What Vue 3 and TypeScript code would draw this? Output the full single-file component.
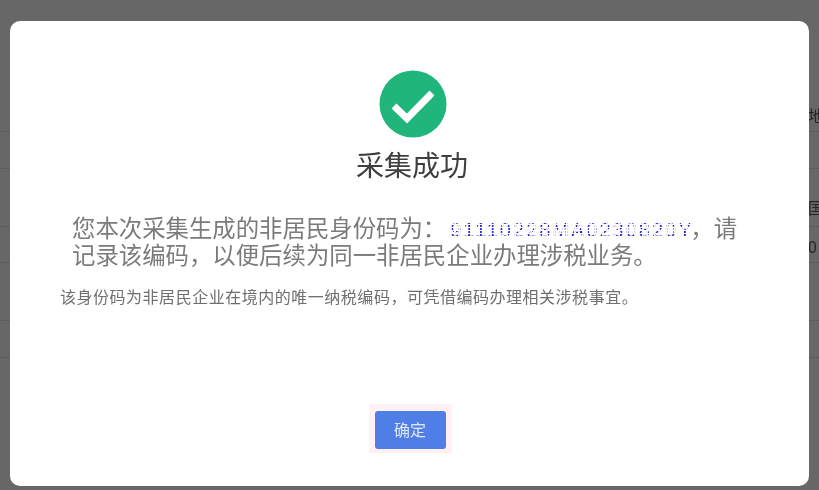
<script setup lang="ts">
const rows: { gap: number; left: string; top: number }[] = [
  { gap: 132, left: '地', top: 115 },
  { gap: 37, left: '', top: 0 },
  { gap: 58, left: '国', top: 207 },
  { gap: 36, left: '0', top: 246 },
  { gap: 58, left: '', top: 0 },
  { gap: 37, left: '', top: 0 },
]
const hints = rows.filter((r) => r.left)
</script>

<template>
  <div class="page">
    <div class="table">
      <div v-for="(r, i) in rows" :key="i" class="row" :style="{ height: r.gap + 'px' }"></div>
    </div>
    <span v-for="h in hints" :key="h.left" class="peek" :style="{ top: h.top - 8 + 'px' }">{{ h.left }}</span>

    <section class="modal">
      <svg class="ok" viewBox="0 0 68 68" width="68" height="68" aria-hidden="true">
        <circle cx="34" cy="34" r="33.5" fill="#1fb57b" />
        <path d="M15 36 L28 48.5 L53 23" fill="none" stroke="#fff" stroke-width="7" stroke-linejoin="miter" />
      </svg>
      <h1 class="title">采集成功</h1>
      <p class="main">
        您本次采集生成的非居民身份码为：<span class="code">91110228MA0230820Y</span>，请<br />记录该编码，以便后续为同一非居民企业办理涉税业务。
      </p>
      <p class="note">该身份码为非居民企业在境内的唯一纳税编码，可凭借编码办理相关涉税事宜。</p>
      <div class="actions">
        <div class="halo"><button class="confirm" type="button">确定</button></div>
      </div>
    </section>
  </div>
</template>

<style>
html, body { margin: 0; background: #666; }
</style>

<style scoped>
.page {
  position: relative;
  width: 819px;
  height: 490px;
  overflow: hidden;
  background: #676767;
  font-family: "Noto Sans CJK SC", "Noto Sans", sans-serif;
}
.table { display: flex; flex-direction: column; }
.row { box-sizing: border-box; border-bottom: 1px solid #5c5c5c; }
.peek {
  position: absolute;
  left: 808px;
  font-size: 16px;
  line-height: 16px;
  color: #242424;
  filter: blur(0.4px);
}
.modal {
  position: absolute;
  left: 10px;
  top: 21px;
  width: 799px;
  height: 465px;
  box-sizing: border-box;
  background: #fff;
  border-radius: 10px;
  display: flex;
  flex-direction: column;
  filter: blur(0.5px);
}
.ok { display: block; margin: 49px auto 0 369px; }
.title {
  margin: 6px 0 0;
  font-size: 28px;
  line-height: 40px;
  font-weight: 400;
  color: #3f3f3f;
  text-align: center;
  padding-left: 5px;
}
.main {
  margin: 30px 0 0 62px;
  font-size: 23.4px;
  line-height: 27px;
  color: #7b7b7b;
  white-space: nowrap;
}
.code {
  display: inline-block;
  width: 242px;
  margin: 0 -2px 0 4px;
  vertical-align: baseline;
  font-family: "Liberation Sans", sans-serif;
  font-size: 20px;
  line-height: 20px;
  letter-spacing: 2px;
  white-space: nowrap;
  color: transparent;
  background:
    repeating-linear-gradient(90deg, #fff 0 2px, transparent 2px 4px),
    repeating-linear-gradient(0deg, #fff 0 1px, #2a2ad0 1px 3px);
  -webkit-background-clip: text;
  background-clip: text;
}
.note {
  margin: 17px 0 0 50px;
  font-size: 16px;
  line-height: 22px;
  letter-spacing: 0.52px;
  color: #6f6f6f;
  white-space: nowrap;
}
.actions {
  margin-top: auto;
  padding-bottom: 33px;
  display: flex;
  justify-content: center;
  padding-left: 1px;
}
.halo {
  background: #fff0f3;
  padding: 7px 6px 4px 6px;
  border-radius: 2px;
}
.confirm {
  display: block;
  width: 71px;
  height: 38px;
  border: none;
  border-radius: 3px;
  background: #4f7fe6;
  color: #dfe7fa;
  font: inherit;
  font-size: 16px;
  padding: 0 0 2px;
}
</style>
